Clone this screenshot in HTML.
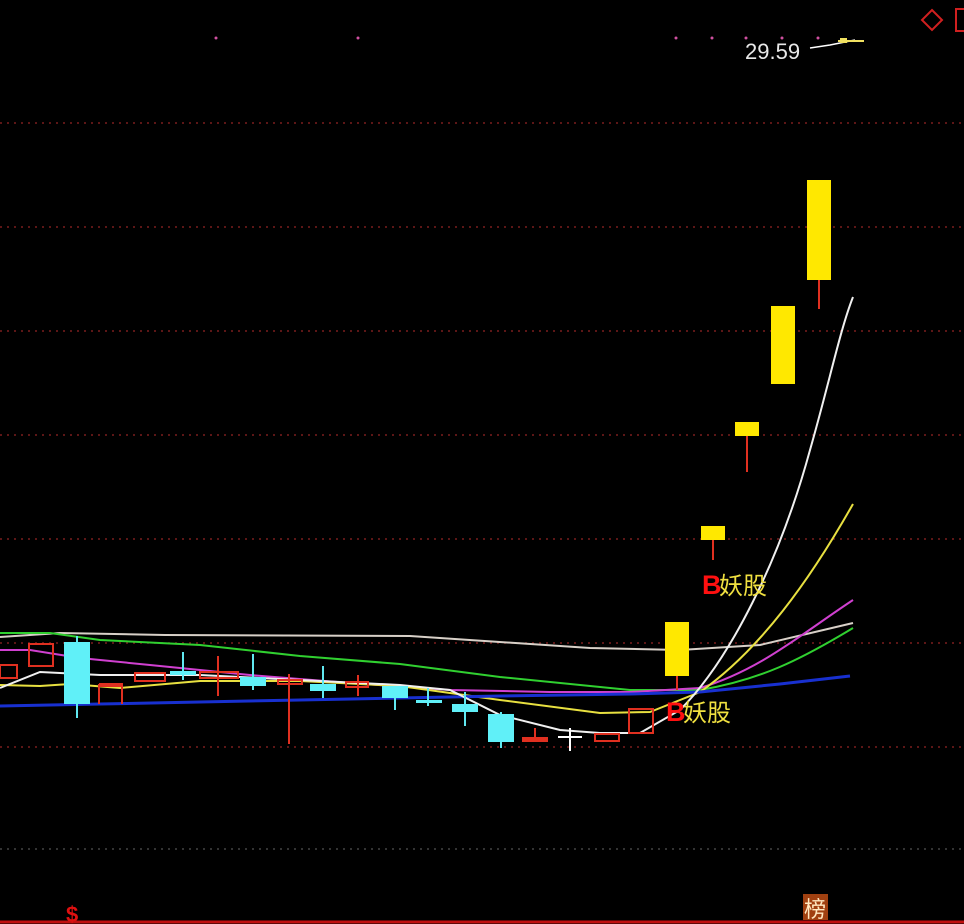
<!DOCTYPE html>
<html><head><meta charset="utf-8"><style>
html,body{margin:0;padding:0;background:#000;width:964px;height:924px;overflow:hidden}
svg{display:block}
text{font-family:"Liberation Sans","Noto Sans CJK SC",sans-serif}
</style></head><body>
<svg width="964" height="924" viewBox="0 0 964 924" xmlns="http://www.w3.org/2000/svg">
<rect width="964" height="924" fill="#000"/>
<g stroke="#7a1e1e" stroke-width="1.5" stroke-dasharray="2 5">
<line x1="0" y1="123" x2="964" y2="123"/>
<line x1="0" y1="227" x2="964" y2="227"/>
<line x1="0" y1="331" x2="964" y2="331"/>
<line x1="0" y1="435" x2="964" y2="435"/>
<line x1="0" y1="539" x2="964" y2="539"/>
<line x1="0" y1="643" x2="964" y2="643"/>
<line x1="0" y1="747" x2="964" y2="747"/>
<line x1="0" y1="849" x2="964" y2="849" stroke="#444"/>
</g>
<line x1="0" y1="922" x2="964" y2="922" stroke="#c01010" stroke-width="3"/>
<g fill="#d050a0">
<circle cx="216" cy="38" r="1.5"/><circle cx="358" cy="38" r="1.5"/><circle cx="676" cy="38" r="1.5"/><circle cx="712" cy="38" r="1.5"/><circle cx="746" cy="38" r="1.5"/><circle cx="782" cy="38" r="1.5"/><circle cx="818" cy="38" r="1.5"/>
</g>
<text x="745" y="59" fill="#e8e8e8" font-size="22">29.59</text>
<path d="M810 48 L830 45 L845 42 L855 40" stroke="#fff" stroke-width="1.5" fill="none"/>
<line x1="838" y1="41" x2="864" y2="41" stroke="#f0e060" stroke-width="2"/>
<rect x="840" y="38" width="7" height="5" fill="#f0e060"/>
<path d="M932 10 L942 20 L932 30 L922 20 Z" stroke="#d02020" stroke-width="2" fill="none"/>
<rect x="956" y="9" width="10" height="22" stroke="#d02020" stroke-width="2" fill="none"/>

<path d="M0 637 L60 633 L165 635 L410 636 L590 648 L680 650 L760 645 L853 623" stroke="#d8d0c8" stroke-width="2" fill="none"/>
<path d="M0 633 L50 633 L100 640 L200 645 L300 656 L400 664 L500 677 L630 690 L700 690 C760 680 800 660 853 628" stroke="#30d030" stroke-width="2" fill="none"/>
<path d="M0 650 L30 650 L80 658 L150 665 L250 675 L350 683 L450 690 L550 692 L630 692 L700 688 C760 670 800 635 853 600" stroke="#d040d0" stroke-width="2" fill="none"/>
<path d="M0 685 L40 686 L70 684 L120 688 L200 681 L300 681 L400 686 L500 700 L600 713 L650 712 L700 692 C760 650 810 580 853 504" stroke="#e8e040" stroke-width="2" fill="none"/>
<path d="M0 706 L100 704 L200 702 L300 700 L400 698 L500 696 L630 694 L700 692 L780 684 L850 676" stroke="#1830d0" stroke-width="3" fill="none"/>
<path d="M0 688 L40 672 L100 675 L200 675 L300 680 L400 685 L450 690 L500 715 L560 730 L600 733 L640 733 L680 710 C730 660 780 560 810 450 C830 380 840 330 853 297" stroke="#f0f0f0" stroke-width="2" fill="none"/>

<g stroke="#e03020" stroke-width="2" fill="none">
<rect x="0" y="665" width="17" height="13"/>
<rect x="29" y="644" width="24" height="22"/>
<line x1="99" y1="684" x2="99" y2="704"/><line x1="122" y1="686" x2="122" y2="704"/>
<rect x="100" y="684" width="22" height="2"/>
<rect x="135" y="673" width="30" height="8"/>
<line x1="218" y1="656" x2="218" y2="696"/>
<rect x="200" y="672" width="38" height="6"/>
<line x1="289" y1="674" x2="289" y2="744"/>
<rect x="278" y="680" width="24" height="4"/>
<line x1="358" y1="675" x2="358" y2="696"/>
<rect x="346" y="682" width="22" height="5"/>
<rect x="595" y="734" width="24" height="7"/>
<rect x="629" y="709" width="24" height="24"/>
</g>
<rect x="522" y="737" width="26" height="5" fill="#e03020"/>
<line x1="535" y1="728" x2="535" y2="738" stroke="#e03020" stroke-width="2"/>
<g stroke="#60e8f0" stroke-width="2">
<line x1="77" y1="636" x2="77" y2="718"/>
<line x1="183" y1="652" x2="183" y2="680"/>
<line x1="253" y1="654" x2="253" y2="690"/>
<line x1="323" y1="666" x2="323" y2="698"/>
<line x1="395" y1="686" x2="395" y2="710"/>
<line x1="428" y1="688" x2="428" y2="706"/>
<line x1="465" y1="692" x2="465" y2="726"/>
<line x1="501" y1="712" x2="501" y2="748"/>
</g>
<g fill="#60f0f8">
<rect x="64" y="642" width="26" height="62"/>
<rect x="170" y="671" width="26" height="4"/>
<rect x="240" y="677" width="26" height="9"/>
<rect x="310" y="684" width="26" height="7"/>
<rect x="382" y="686" width="26" height="12"/>
<rect x="416" y="700" width="26" height="3"/>
<rect x="452" y="704" width="26" height="8"/>
<rect x="488" y="714" width="26" height="28"/>
</g>
<g stroke="#fff" stroke-width="2"><line x1="570" y1="728" x2="570" y2="751"/><line x1="558" y1="737" x2="582" y2="737"/></g>

<g stroke="#e03020" stroke-width="2">
<line x1="677" y1="676" x2="677" y2="690"/>
<line x1="713" y1="540" x2="713" y2="560"/>
<line x1="747" y1="436" x2="747" y2="472"/>
<line x1="819" y1="280" x2="819" y2="309"/>
</g>
<g fill="#ffe800">
<rect x="665" y="622" width="24" height="54"/>
<rect x="701" y="526" width="24" height="14"/>
<rect x="735" y="422" width="24" height="14"/>
<rect x="771" y="306" width="24" height="78"/>
<rect x="807" y="180" width="24" height="100"/>
</g>
<text x="702" y="594" font-size="27" font-weight="bold" fill="#ff1010">B</text>
<text x="719" y="594" font-size="24" fill="#f0e040">妖股</text>
<text x="666" y="721" font-size="27" font-weight="bold" fill="#ff1010">B</text>
<text x="683" y="721" font-size="24" fill="#f0e040">妖股</text>
<text x="66" y="922" font-size="22" font-weight="bold" fill="#e01010">$</text>
<rect x="803" y="894" width="25" height="26" fill="#a04010"/>
<text x="804" y="917" font-size="22" fill="#ffe8c0">榜</text>
</svg>
</body></html>
